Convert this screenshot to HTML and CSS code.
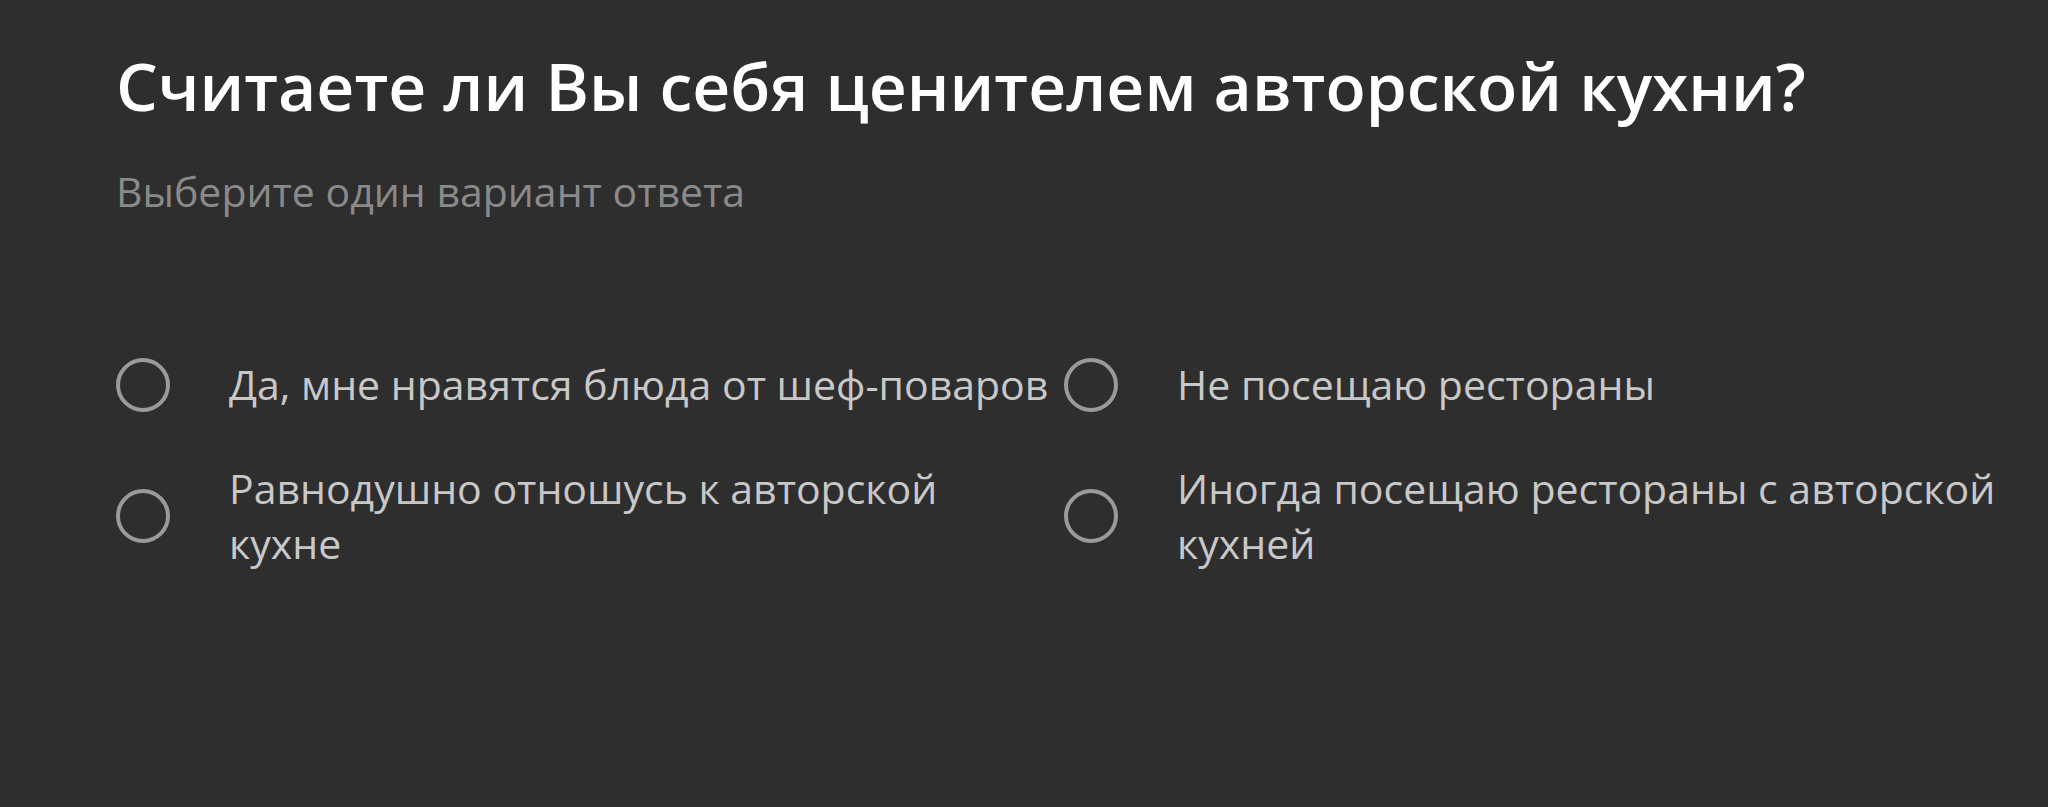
FILE: index.html
```html
<!DOCTYPE html>
<html lang="ru">
<head>
<meta charset="utf-8">
<title>Опрос</title>
<link rel="stylesheet" href="styles.css">
</head>
<body>
<main class="question">
  <h1 class="question-title">Считаете ли Вы себя ценителем авторской кухни?</h1>
  <p class="question-hint">Выберите один вариант ответа</p>
  <div class="options">
    <label class="option">
      <span class="radio"></span>
      <span class="option-text">Да, мне нравятся блюда от шеф-поваров</span>
    </label>
    <label class="option">
      <span class="radio"></span>
      <span class="option-text">Не посещаю рестораны</span>
    </label>
    <label class="option">
      <span class="radio"></span>
      <span class="option-text">Равнодушно отношусь к авторской кухне</span>
    </label>
    <label class="option">
      <span class="radio"></span>
      <span class="option-text">Иногда посещаю рестораны с авторской кухней</span>
    </label>
  </div>
</main>
</body>
</html>
```
FILE: styles.css
```css
html, body {
  margin: 0;
  padding: 0;
  background: #2e2e2e;
}
body {
  font-family: "Open Sans", "Noto Sans", sans-serif;
  height: 807px;
  overflow: hidden;
}
.question {
  padding: 40px 0 0 116px;
}
.question-title {
  margin: 0;
  font-size: 66px;
  font-weight: 600;
  line-height: 90px;
  color: #ffffff;
}
.question-hint {
  margin: 33px 0 0;
  font-size: 41px;
  font-weight: 400;
  line-height: 56px;
  color: #8a8a8a;
}
.options {
  display: grid;
  grid-template-columns: 948px 948px;
  row-gap: 49px;
  margin-top: 138px;
}
.option {
  display: flex;
  align-items: center;
  gap: 59px;
}
.radio {
  flex: none;
  width: 54px;
  height: 54px;
  box-sizing: border-box;
  border: 4px solid #9a9a9a;
  border-radius: 50%;
}
.option-text {
  width: 823px;
  font-size: 41px;
  line-height: 55px;
  color: #c8c8c8;
}
```
